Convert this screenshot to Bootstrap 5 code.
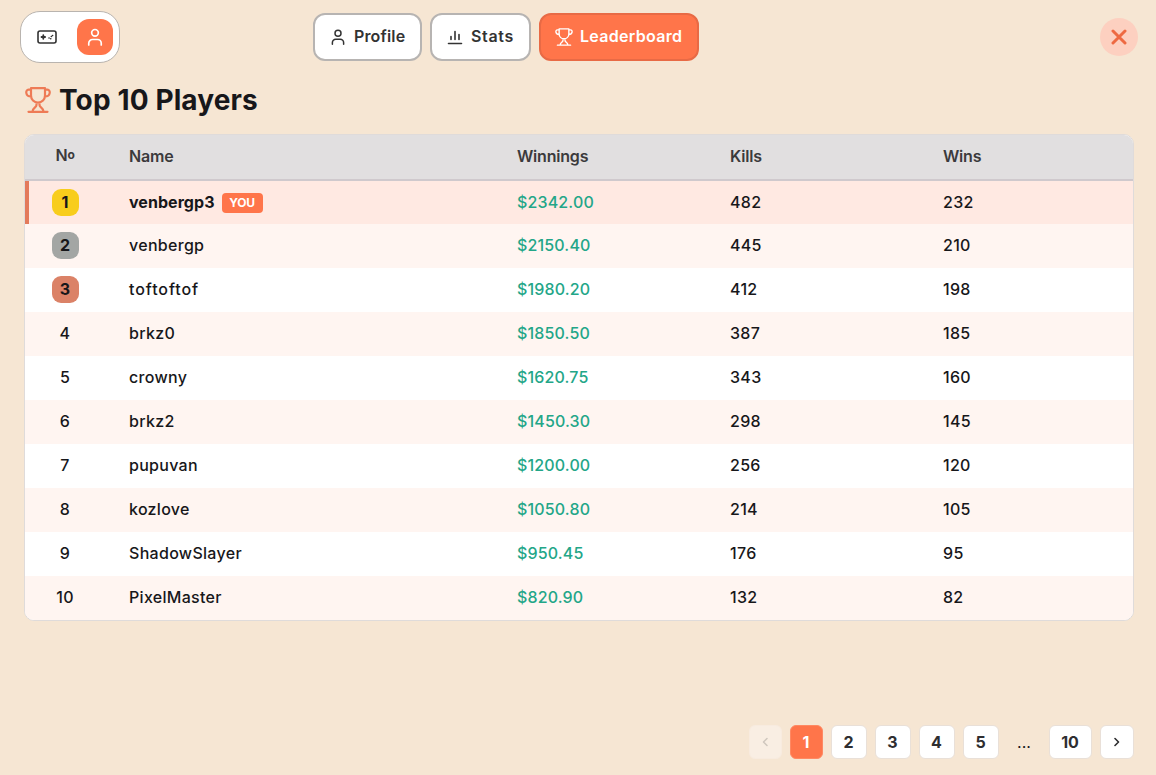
<!DOCTYPE html>
<html lang="en">
<head>
<meta charset="utf-8">
<meta name="viewport" content="width=device-width, initial-scale=1">
<title>Leaderboard</title>
<link href="https://cdn.jsdelivr.net/npm/bootstrap@5.3.0/dist/css/bootstrap.min.css" rel="stylesheet">
<style>
:root{--accent:#ff754a;--sand:#f6e6d3;--ink:#17171a}
body{background:var(--sand);color:var(--ink);font-family:Inter,"Liberation Sans",sans-serif;font-size:16px;height:100vh;overflow:hidden}
svg{fill:none;stroke:currentColor;stroke-linecap:round;stroke-linejoin:round;display:block;flex:none}
.topbar{display:grid;grid-template-columns:293px auto 1fr;align-items:center;height:74px;padding:0 18px 0 20px}
.switcher{width:100px;height:52px;border:1px solid #b9b4af;border-radius:20px;background:#fff;padding:0 6px 0 8px}
.switcher button{width:36px;height:36px;border:0;background:none;border-radius:12px;color:#333;padding:0}
.switcher button.active{background:var(--accent);color:#fff}
.tab-btn{height:48px;border:2px solid #b7b4b2;border-radius:12px;background:#fff;color:#333;font-weight:600;padding:0 14px 1px;gap:7px}
.tab-btn span{position:relative;top:-.5px}
.tab-btn.active{background:var(--accent);border-color:#e86a45;color:#fff}
.t1{width:109px}.t1 span{letter-spacing:.15px}
.t2{width:101px}.t2 span{letter-spacing:.65px}
.t3{width:160px}.t3 span{letter-spacing:.3px}
.close-btn{width:38px;height:38px;border:0;border-radius:50%;background:#fdd0c0;color:#ee6a42;padding:0}
.board-page{margin:0 22px 0 24px}
h1{font-size:28px;font-weight:700;line-height:36px;margin:8px 0 16px;letter-spacing:.12px}
h1 svg{color:#ee7b56;margin:0 8px 1px 1px}
.board{border:1px solid #dfdbda;border-radius:10px;overflow:hidden;background:#fff}
.board table{table-layout:fixed;width:100%;border-collapse:separate;border-spacing:0}
.board td,.board th{padding:0 24px 2px;height:44px;vertical-align:middle;line-height:20px;white-space:nowrap}
.board th{height:46px;background:#e1dfe0;color:#3b3a3c;font-weight:600;border-bottom:2px solid #cfc9cd;letter-spacing:-.2px}
.board th:first-child,.board td:first-child{padding:0 0 2px;text-align:center}
.raised{font-size:12px;position:relative;top:-2px;font-weight:700}
.board td{font-weight:500;letter-spacing:.3px}
.board tbody tr:nth-child(even) td{background:#fff5f1}
.board tbody tr.me td{background:#ffe9e2;height:43px}
.board tbody tr.me td:not(:nth-child(2)){padding-bottom:1px}
.board tr.me td:first-child{box-shadow:inset 4px 0 #e37a5b}
.board td:nth-child(3){color:#23a688;letter-spacing:.15px}
.rank{width:27px;height:27px;border-radius:9px;font-weight:700;letter-spacing:0}
.gold{background:#f8cd1c}.silver{background:#a3a6a4}.bronze{background:#db8267}
.you{background:var(--accent);color:#fff;border-radius:4px;font-size:12px;font-weight:700;line-height:20px;width:41px;margin:2px 0 0 7px;letter-spacing:-.2px}
.pager{padding:0 22px 16px 0;gap:8px}
.pager .pg{height:34px;width:36px;border:1px solid #e9e0d8;border-radius:6px;background:#fff;color:#2e2e30;font-weight:700;padding:0 1px 1px 0}
.pager .pg.active{background:var(--accent);border-color:#ff8963;color:#fff;width:33px}
.pager .edge{width:34px}.pager .off{width:33px;background:#f9eee3;border-color:#f8ebdf;color:#cfc6be}
.pager .ten{width:43px}.dots{width:34px;text-align:center}
.n1{font-weight:700;letter-spacing:.05px}.n3{letter-spacing:.9px!important}
</style>
</head>
<body class="d-flex flex-column">
<svg width="0" height="0" class="position-absolute">
<symbol id="user" viewBox="0 0 24 24"><circle cx="12" cy="7" r="4"/><path d="M4.500 21.500v-2a4.500 4.500 0 0 1 4.500-4.500h6a4.500 4.500 0 0 1 4.500 4.500v2"/></symbol>
<symbol id="trophy" viewBox="0 0 26 26"><path d="M6 1.200h14v7.300c0 4-3 7-7 7s-7-3-7-7zM6 2.700H3.500C.2 2.700.2 9.500 6 9.500M20 2.700h2.500c3.300 0 3.300 6.800-2.500 6.800M11.500 15.700v2.300c0 2.500-4 3-4 6.500M14.500 15.700v2.300c0 2.500 4 3 4 6.500M3.500 24.800h19"/></symbol>
</svg>
<header class="topbar">
<div class="switcher d-flex align-items-center justify-content-between">
<button class="d-flex align-items-center justify-content-center" aria-label="Games"><svg width="20" height="14" viewBox="0 0 20 14" stroke-width="1.600"><rect x="1" y="1" width="18" height="12" rx="2"/><path d="M4.500 7h3.600M6.300 5.200v3.600" stroke-width="1.800"/><path d="M12 8h.1M13.700 8.700h.1M15.500 5.500h.1M14.300 6.500h.1"/></svg></button>
<button class="active d-flex align-items-center justify-content-center" aria-label="Account"><svg width="20" height="20" stroke-width="2"><use href="#user"/></svg></button>
</div>
<nav class="d-flex gap-2">
<button class="tab-btn t1 d-flex align-items-center"><svg width="18" height="18" stroke-width="2"><use href="#user"/></svg><span>Profile</span></button>
<button class="tab-btn t2 d-flex align-items-center"><svg width="18" height="18" viewBox="0 0 18 18" stroke-width="1.600"><path d="M5 11.500V8.500M9 11.500V3.500M13 11.500V6.500M2.500 15.500h13"/></svg><span>Stats</span></button>
<button class="tab-btn t3 active d-flex align-items-center"><svg width="18" height="18" stroke-width="2"><use href="#trophy"/></svg><span>Leaderboard</span></button>
</nav>
<button class="close-btn d-flex align-items-center justify-content-center ms-auto" aria-label="Close"><svg width="16" height="16" viewBox="0 0 16 16" stroke-width="3"><path d="M2 2l12 12M14 2L2 14"/></svg></button>
</header>
<main class="board-page flex-grow-1">
<h1 class="d-flex align-items-center"><svg width="26" height="26" stroke-width="2.200"><use href="#trophy"/></svg><span>Top 10 Players</span></h1>
<div class="board">
<table>
<colgroup><col width="80"><col width="388"><col width="213"><col width="213"><col></colgroup>
<thead><tr><th>N<span class="raised">o</span></th><th>Name</th><th>Winnings</th><th>Kills</th><th>Wins</th></tr></thead>
<tbody>
<tr class="me"><td><span class="rank gold d-inline-flex align-items-center justify-content-center">1</span></td><td><div class="d-flex align-items-center"><span class="n1">venbergp3</span><span class="you text-center">YOU</span></div></td><td>$2342.00</td><td>482</td><td>232</td></tr>
<tr><td><span class="rank silver d-inline-flex align-items-center justify-content-center">2</span></td><td>venbergp</td><td>$2150.40</td><td>445</td><td>210</td></tr>
<tr><td><span class="rank bronze d-inline-flex align-items-center justify-content-center">3</span></td><td class="n3">toftoftof</td><td>$1980.20</td><td>412</td><td>198</td></tr>
<tr><td>4</td><td>brkz0</td><td>$1850.50</td><td>387</td><td>185</td></tr>
<tr><td>5</td><td>crowny</td><td>$1620.75</td><td>343</td><td>160</td></tr>
<tr><td>6</td><td>brkz2</td><td>$1450.30</td><td>298</td><td>145</td></tr>
<tr><td>7</td><td>pupuvan</td><td>$1200.00</td><td>256</td><td>120</td></tr>
<tr><td>8</td><td>kozlove</td><td>$1050.80</td><td>214</td><td>105</td></tr>
<tr><td>9</td><td>ShadowSlayer</td><td>$950.45</td><td>176</td><td>95</td></tr>
<tr><td>10</td><td>PixelMaster</td><td>$820.90</td><td>132</td><td>82</td></tr>
</tbody>
</table>
</div>
</main>
<nav class="pager d-flex justify-content-end align-items-center">
<button class="pg edge off d-flex align-items-center justify-content-center" aria-label="Previous"><svg width="6" height="10" viewBox="0 0 6 10" stroke-width="1.500"><path d="M5 1.500L1.500 5 5 8.500"/></svg></button>
<button class="pg active">1</button><button class="pg">2</button><button class="pg">3</button><button class="pg">4</button><button class="pg">5</button>
<span class="dots">...</span>
<button class="pg ten">10</button>
<button class="pg edge d-flex align-items-center justify-content-center" aria-label="Next"><svg width="6" height="10" viewBox="0 0 6 10" stroke-width="1.600"><path d="M1 1.500L4.500 5 1 8.500"/></svg></button>
</nav>
<script src="https://cdn.jsdelivr.net/npm/bootstrap@5.3.0/dist/js/bootstrap.bundle.min.js"></script>
</body>
</html>
